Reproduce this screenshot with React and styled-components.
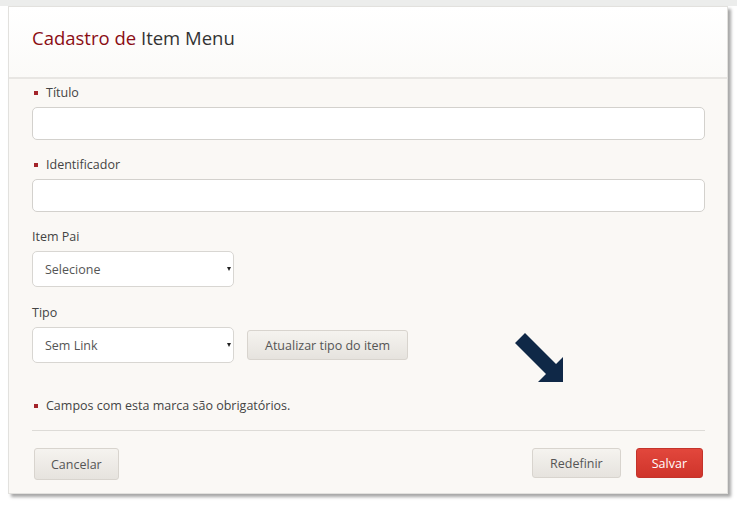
import React from 'react';
import styled, { createGlobalStyle } from 'styled-components';

const GlobalStyle = createGlobalStyle`
    body {
        margin: 0;
        background: #ffffff;
        font-family: 'Open Sans', 'DejaVu Sans', sans-serif;
    }
`;

const Page = styled.div`
    padding: 6px 9px 10px 8px;
    background: linear-gradient(#ecedec 0, #ecedec 6px, #ffffff 6px);
`;

const Panel = styled.div`
    position: relative;
    width: 718px;
    height: 486px;
    background: #faf8f5;
    border: 1px solid #e2e1de;
    box-shadow: 3px 3px 3px rgba(0, 0, 0, 0.35);
    display: flex;
    flex-direction: column;
`;

const Header = styled.div`
    height: 72px;
    background: linear-gradient(#ffffff, #fbfaf8);
    border-bottom: 2px solid #e8e6e3;
    padding: 18px 23px 0;
    box-sizing: border-box;
`;

const Title = styled.h1`
    margin: 0;
    font-size: 18.5px;
    font-weight: 400;
    color: #333;
    span {
        color: #8b0d14;
    }
`;

const Body = styled.div`
    padding: 4px 22px 0 23px;
`;

const Field = styled.div`
    margin-bottom: ${p => p.$gap || 15}px;
`;

const Label = styled.div`
    display: flex;
    align-items: center;
    height: 18px;
    margin-bottom: 6px;
    font-size: 12.5px;
    color: #444;
`;

const Mark = styled.i`
    display: inline-block;
    width: 4px;
    height: 4px;
    background: #a3242a;
    margin: 1px 8px 0 2px;
`;

const TextInput = styled.input`
    display: block;
    box-sizing: border-box;
    width: 100%;
    height: 33px;
    border: 1px solid #d3d1cd;
    border-radius: 5px;
    background: #fff;
    outline: none;
`;

const Row = styled.div`
    display: flex;
    align-items: center;
    gap: 13px;
`;

const SelectWrap = styled.div`
    position: relative;
    width: 202px;
    &::after {
        content: '';
        position: absolute;
        right: 3px;
        top: 50%;
        margin-top: -2px;
        border: 2px solid transparent;
        border-top: 4px solid #222;
        border-bottom: 0;
    }
`;

const Select = styled.select`
    display: block;
    width: 100%;
    height: 36px;
    box-sizing: border-box;
    appearance: none;
    border: 1px solid #d8d6d2;
    border-radius: 5px;
    background: #fff;
    padding: 0 12px;
    font-family: inherit;
    font-size: 12.5px;
    color: #555;
    outline: none;
`;

const Button = styled.button`
    height: ${p => p.$h || 30}px;
    padding: 0 ${p => p.$px || 14}px;
    border-radius: 3px;
    font-family: inherit;
    font-size: 12.5px;
    cursor: pointer;
    color: ${p => (p.$primary ? '#fff' : '#555')};
    border: 1px solid ${p => (p.$primary ? '#c4332b' : '#d8d4ce')};
    background: ${p =>
        p.$primary
            ? 'linear-gradient(#e2473c, #cf342b)'
            : 'linear-gradient(#f5f3ef, #e6e3de)'};
`;

const Note = styled.div`
    display: flex;
    align-items: center;
    margin-top: 33px;
    height: 18px;
    font-size: 12.5px;
    color: #444;
`;

const Rule = styled.hr`
    margin: 16px 0 17px;
    border: 0;
    border-top: 1px solid #dddbd7;
`;

const Footer = styled.div`
    display: flex;
    justify-content: space-between;
    align-items: flex-start;
    padding: 0 2px;
`;

const Actions = styled.div`
    display: flex;
    gap: 15px;
`;

const Arrow = styled.svg`
    position: absolute;
    left: 496px;
    top: 319px;
`;

export default function App() {
    return (
        <>
            <GlobalStyle />
            <Page>
                <Panel>
                    <Header>
                        <Title>
                            <span>Cadastro de</span> Item Menu
                        </Title>
                    </Header>
                    <Body>
                        <Field>
                            <Label><Mark />Título</Label>
                            <TextInput />
                        </Field>
                        <Field>
                            <Label><Mark />Identificador</Label>
                            <TextInput />
                        </Field>
                        <Field $gap={16}>
                            <Label>Item Pai</Label>
                            <SelectWrap>
                                <Select defaultValue="">
                                    <option value="">Selecione</option>
                                </Select>
                            </SelectWrap>
                        </Field>
                        <Field $gap={0}>
                            <Label>Tipo</Label>
                            <Row>
                                <SelectWrap>
                                    <Select defaultValue="sem">
                                        <option value="sem">Sem Link</option>
                                    </Select>
                                </SelectWrap>
                                <Button $px={17}>Atualizar tipo do item</Button>
                            </Row>
                        </Field>
                        <Note><Mark />Campos com esta marca são obrigatórios.</Note>
                        <Rule />
                        <Footer>
                            <Button $h={32} $px={16}>Cancelar</Button>
                            <Actions>
                                <Button $px={17}>Redefinir</Button>
                                <Button $primary $px={15}>Salvar</Button>
                            </Actions>
                        </Footer>
                    </Body>
                    <Arrow width="62" height="62" viewBox="0 0 62 62">
                        <polygon
                            points="10,17 20,7 51,38 58,31 58,56 33,56 41,48"
                            fill="#0f2847"
                        />
                    </Arrow>
                </Panel>
            </Page>
        </>
    );
}
